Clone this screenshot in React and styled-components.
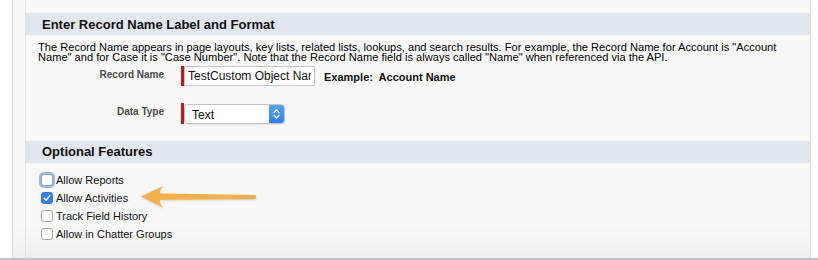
import styled, { createGlobalStyle } from "styled-components";

const GlobalStyle = createGlobalStyle`
  html, body {
    margin: 0;
    padding: 0;
    background: #ffffff;
    font-family: "Liberation Sans", Arial, sans-serif;
  }
`;

const checkboxes = [
  { label: "Allow Reports", focused: true },
  { label: "Allow Activities", checked: true },
  { label: "Track Field History" },
  { label: "Allow in Chatter Groups" },
];

export default function App() {
  return (
    <>
      <GlobalStyle />
      <Page>
        <Gutter />
        <Shell>
          <Panel>
            <SectionHeader>Enter Record Name Label and Format</SectionHeader>
            <Description>
              The Record Name appears in page layouts, key lists, related lists,
              lookups, and search results. For example, the Record Name for
              Account is "Account Name" and for Case it is "Case Number". Note
              that the Record Name field is always called "Name" when referenced
              via the API.
            </Description>

            <FormRow>
              <FieldLabel>Record Name</FieldLabel>
              <Required>
                <TextInput readOnly value="TestCustom Object Name" />
              </Required>
              <Example>Example:&nbsp; Account Name</Example>
            </FormRow>

            <FormRow $spaced>
              <FieldLabel>Data Type</FieldLabel>
              <Required>
                <Select>
                  <SelectValue>Text</SelectValue>
                  <Stepper>
                    <svg width="9" height="12" viewBox="0 0 9 12">
                      <path
                        d="M2 4.5 L4.5 2 L7 4.5 M2 7.5 L4.5 10 L7 7.5"
                        fill="none"
                        stroke="#fff"
                        strokeWidth="1.4"
                        strokeLinecap="round"
                        strokeLinejoin="round"
                      />
                    </svg>
                  </Stepper>
                </Select>
              </Required>
            </FormRow>

            <SectionHeader $gap>Optional Features</SectionHeader>
            <Checklist>
              {checkboxes.map((c) => (
                <CheckRow key={c.label}>
                  <Box $checked={c.checked} $focused={c.focused}>
                    {c.checked && (
                      <svg width="8" height="8" viewBox="0 0 8 8">
                        <path
                          d="M1.2 4.2 L3.2 6.2 L6.8 1.6"
                          fill="none"
                          stroke="#fff"
                          strokeWidth="1.5"
                          strokeLinecap="round"
                          strokeLinejoin="round"
                        />
                      </svg>
                    )}
                  </Box>
                  {c.label}
                </CheckRow>
              ))}
              <Arrow width="118" height="25" viewBox="0 0 118 25">
                <path
                  d="M1 11.5 L23 1 Q19 5.5 20 8.5 L115 10 Q117.5 12 115 14 L20 14.8 Q19 18 23 22.5 Z"
                  fill="#f5b04b"
                />
              </Arrow>
            </Checklist>
          </Panel>
        </Shell>
      </Page>
    </>
  );
}

const Page = styled.div`
  display: flex;
  height: 258px;
  border-bottom: 2px solid #b9c3cc;
  background: #ffffff;
`;

const Gutter = styled.div`
  width: 12px;
  border-right: 1px solid #d9d9d9;
`;

const Shell = styled.div`
  flex: 1;
  display: flex;
  margin-right: 7px;
  padding-left: 12px;
  border-right: 1px solid #dcdcdc;
  background: linear-gradient(#f8f8f8 0%, #f8f8f8 88%, #eeeeee 100%);
`;

const Panel = styled.div`
  flex: 1;
  display: flex;
  flex-direction: column;
  padding-top: 13px;
  border-left: 1px solid #e4e4e4;
`;

const SectionHeader = styled.div`
  display: flex;
  align-items: center;
  height: 22px;
  margin-top: ${(p) => (p.$gap ? "17px" : "0")};
  padding-left: 16px;
  background: #e2e6ee;
  color: #111;
  font-size: 13px;
  font-weight: bold;
`;

const Description = styled.p`
  margin: 0;
  padding: 7px 12px 0 12px;
  font-size: 11.1px;
  line-height: 10.4px;
  color: #000;
`;

const FormRow = styled.div`
  display: grid;
  grid-template-columns: 138px auto auto 1fr;
  column-gap: 17px;
  align-items: start;
  margin-top: ${(p) => (p.$spaced ? "17px" : "3px")};
`;

const FieldLabel = styled.div`
  padding-top: 3px;
  text-align: right;
  color: #4a4a4a;
  font-size: 10px;
  font-weight: bold;
`;

const Required = styled.div`
  display: flex;
  gap: 1px;
  border-left: 3px solid #c4141c;
`;

const TextInput = styled.input`
  box-sizing: border-box;
  width: 131px;
  height: 20px;
  margin: 0;
  padding: 1px 3px 0;
  border: 1px solid #c6c6c6;
  background: #fff;
  color: #111;
  font-family: "Liberation Sans", Arial, sans-serif;
  font-size: 12px;
  outline: none;
`;

const Example = styled.div`
  margin-left: -8px;
  padding-top: 5px;
  color: #111;
  font-size: 11px;
  font-weight: bold;
`;

const Select = styled.div`
  box-sizing: border-box;
  display: flex;
  align-items: stretch;
  width: 101px;
  height: 20px;
  margin-top: 1px;
  border: 1px solid #c2c2c2;
  border-radius: 4px;
  background: #fff;
  box-shadow: 0 1px 1px rgba(0, 0, 0, 0.08);
  overflow: hidden;
`;

const SelectValue = styled.div`
  flex: 1;
  display: flex;
  align-items: center;
  padding: 2px 0 0 7px;
  color: #111;
  font-size: 12px;
`;

const Stepper = styled.div`
  display: flex;
  align-items: center;
  justify-content: center;
  width: 15px;
  background: linear-gradient(#5aa2f7, #2f7ef0);
`;

const Checklist = styled.div`
  position: relative;
  display: flex;
  flex-direction: column;
  padding: 8px 0 0 15px;
`;

const CheckRow = styled.div`
  display: flex;
  align-items: center;
  gap: 3px;
  height: 18px;
  color: #111;
  font-size: 11px;
`;

const Box = styled.span`
  box-sizing: border-box;
  display: flex;
  align-items: center;
  justify-content: center;
  width: 12px;
  height: 12px;
  border-radius: 3px;
  border: 1px solid ${(p) => (p.$checked ? "#2f78e4" : "#a3a3a3")};
  background: ${(p) => (p.$checked ? "#3380ea" : "#fff")};
  box-shadow: ${(p) => (p.$focused ? "0 0 0 2px #90b8ee" : "none")};
`;

const Arrow = styled.svg`
  position: absolute;
  left: 114px;
  top: 22px;
  filter: drop-shadow(0 1px 1px rgba(120, 80, 20, 0.25));
`;
